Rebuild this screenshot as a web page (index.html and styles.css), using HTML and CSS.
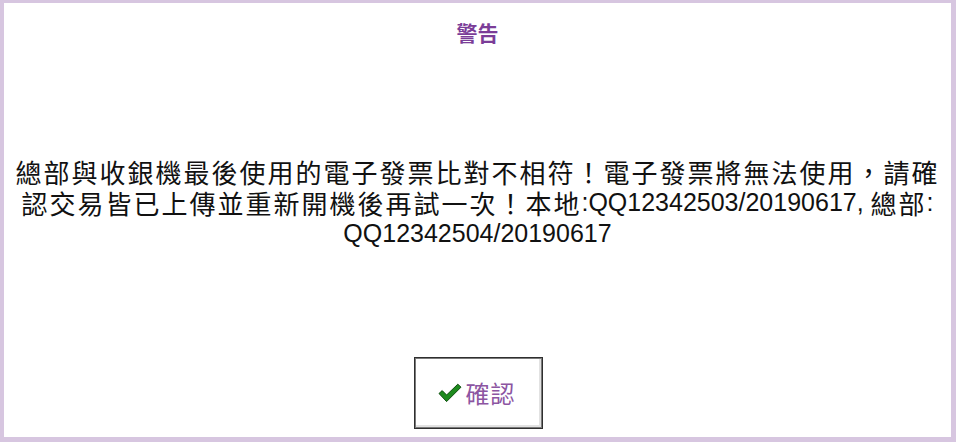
FILE: index.html
```html
<!DOCTYPE html>
<html lang="zh-Hant">
<head>
<meta charset="utf-8">
<title>警告</title>
<link rel="stylesheet" href="styles.css">
</head>
<body>
<div class="dialog">
  <h1 class="title">警告</h1>
  <p class="message">總部與收銀機最後使用的電子發票比對不相符！電子發票將無法使用，請確認交易皆已上傳並重新開機後再試一次！本地<span class="latin">:QQ12342503/20190617, </span>總部<span class="latin">: QQ12342504/20190617</span></p>
  <div class="actions">
    <button class="btn" type="button">
      <svg class="check" width="24" height="20" viewBox="0 0 24 20" aria-hidden="true">
        <path d="M1 10.5 L4.2 7.6 L8.6 12 L19.8 1.2 L23 4.2 L8.6 18.6 Z" fill="#1d8a1d" stroke="#0d4d0d" stroke-width="1" stroke-linejoin="round"/>
      </svg>
      <span class="btn-label">確認</span>
    </button>
  </div>
</div>
</body>
</html>
```

FILE: styles.css
```css
html, body {
  margin: 0;
  padding: 0;
  background: #ffffff;
}

.dialog {
  box-sizing: border-box;
  width: 956px;
  height: 442px;
  display: flex;
  flex-direction: column;
  background: #ffffff;
  border-style: solid;
  border-color: #d7c6e0;
  border-width: 3px 5px 5px 4px;
  font-family: "Noto Sans CJK TC", "Liberation Sans", sans-serif;
}

.title {
  margin: 0;
  padding-top: 15px;
  text-align: center;
  font-size: 21px;
  line-height: 28px;
  font-weight: bold;
  color: #7b3d98;
}

.message {
  margin: 110px 0 0 0;
  text-align: center;
  font-size: 26px;
  line-height: 31px;
  letter-spacing: 2px;
  color: #111111;
}

.latin {
  font-family: "Liberation Sans", sans-serif;
  font-size: 25px;
  line-height: 20px;
  letter-spacing: 0;
  vertical-align: 3px;
}

.actions {
  margin-top: auto;
  padding-bottom: 8px;
  display: flex;
  justify-content: center;
}

.btn {
  box-sizing: border-box;
  width: 129px;
  height: 72px;
  margin-left: 2px;
  display: flex;
  align-items: center;
  justify-content: center;
  gap: 4px;
  padding: 0 4px 0 0;
  background: #ffffff;
  border: 1px solid #2f2f2f;
  box-shadow: inset 1px 1px 0 #7a7a7a, inset -1px -1px 0 #7a7a7a, inset -3px -3px 0 #e2e2e2;
  font-family: "Noto Sans CJK TC", "Liberation Sans", sans-serif;
  cursor: pointer;
}

.check {
  display: block;
}

.btn-label {
  font-size: 24px;
  line-height: 30px;
  color: #8c55a2;
  letter-spacing: 1px;
}
```
